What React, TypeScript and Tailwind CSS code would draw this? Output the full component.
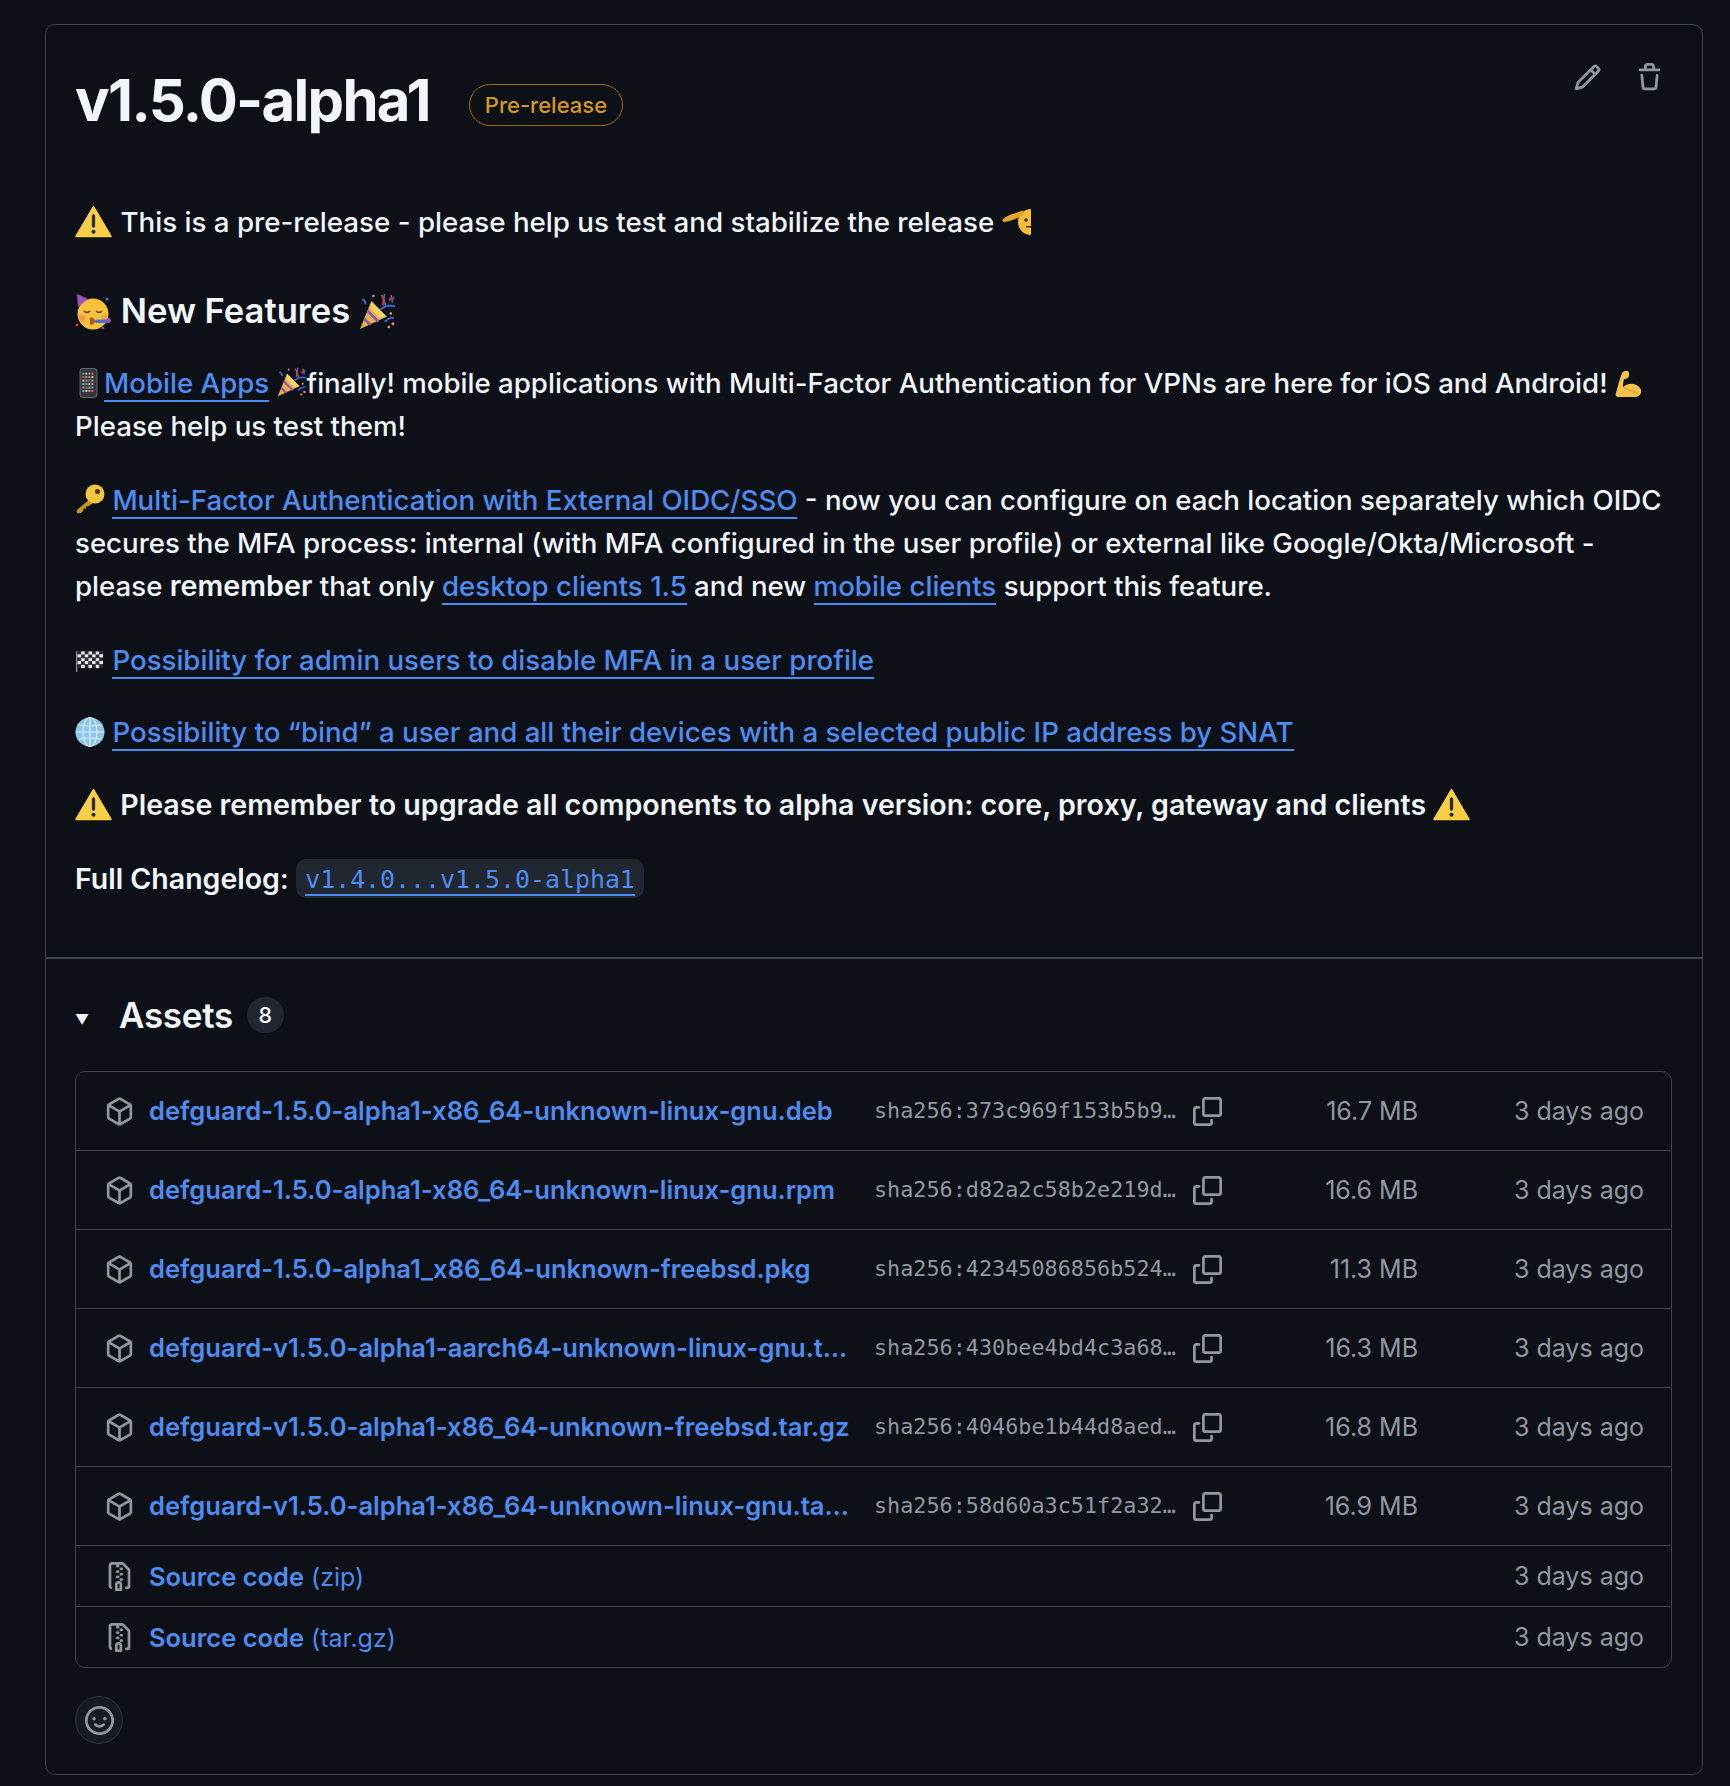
import type { ReactNode } from "react";

const sans = "font-['Inter','Liberation_Sans',sans-serif]";
const mono = "font-['DejaVu_Sans_Mono','Liberation_Mono',monospace]";

function Octicon({ d, size = 29, className = "" }: { d: string; size?: number; className?: string }) {
  return (
    <svg viewBox="0 0 16 16" width={size} height={size} fill="currentColor" className={`shrink-0 ${className}`}>
      <path d={d} />
    </svg>
  );
}

const icons = {
  pencil:
    "M11.013 1.427a1.75 1.75 0 0 1 2.474 0l1.086 1.086a1.75 1.75 0 0 1 0 2.474l-8.61 8.61c-.21.21-.47.364-.756.445l-3.251.93a.75.75 0 0 1-.927-.928l.929-3.25c.081-.286.235-.547.445-.758l8.61-8.61Zm.176 4.823L9.75 4.81l-6.286 6.287a.253.253 0 0 0-.064.108l-.558 1.953 1.953-.558a.253.253 0 0 0 .108-.064Zm1.238-3.763a.25.25 0 0 0-.354 0L10.811 3.75l1.439 1.44 1.263-1.263a.25.25 0 0 0 0-.354Z",
  trash:
    "M11 1.75V3h2.25a.75.75 0 0 1 0 1.5H2.75a.75.75 0 0 1 0-1.5H5V1.75C5 .784 5.784 0 6.75 0h2.5C10.216 0 11 .784 11 1.75ZM4.496 6.675l.66 6.6a.25.25 0 0 0 .249.225h5.19a.25.25 0 0 0 .249-.225l.66-6.6a.75.75 0 0 1 1.492.149l-.66 6.6A1.748 1.748 0 0 1 10.595 15h-5.19a1.75 1.75 0 0 1-1.741-1.575l-.66-6.6a.75.75 0 1 1 1.492-.15ZM6.5 1.75V3h3V1.75a.25.25 0 0 0-.25-.25h-2.5a.25.25 0 0 0-.25.25Z",
  copy:
    "M0 6.75C0 5.784.784 5 1.75 5h1.5a.75.75 0 0 1 0 1.5h-1.5a.25.25 0 0 0-.25.25v7.5c0 .138.112.25.25.25h7.5a.25.25 0 0 0 .25-.25v-1.5a.75.75 0 0 1 1.5 0v1.5A1.75 1.75 0 0 1 9.25 16h-7.5A1.75 1.75 0 0 1 0 14.25ZM5 1.75C5 .784 5.784 0 6.75 0h7.5C15.216 0 16 .784 16 1.75v7.5A1.75 1.75 0 0 1 14.25 11h-7.5A1.75 1.75 0 0 1 5 9.25Zm1.75-.25a.25.25 0 0 0-.25.25v7.5c0 .138.112.25.25.25h7.5a.25.25 0 0 0 .25-.25v-7.5a.25.25 0 0 0-.25-.25Z",
  box: "m8.878.392 5.25 3.045c.54.314.872.89.872 1.514v6.098a1.75 1.75 0 0 1-.872 1.514l-5.25 3.045a1.75 1.75 0 0 1-1.756 0l-5.25-3.045A1.75 1.75 0 0 1 1 11.049V4.951c0-.624.332-1.201.872-1.514L7.122.392a1.75 1.75 0 0 1 1.756 0ZM7.875 1.69l-4.63 2.685L8 7.133l4.755-2.758-4.63-2.685a.248.248 0 0 0-.25 0ZM2.5 5.677v5.372c0 .09.047.171.125.216l4.625 2.683V8.432Zm6.25 8.271 4.625-2.683a.25.25 0 0 0 .125-.216V5.677L8.75 8.432Z",
  zip: "M3.5 1.75v11.5c0 .09.048.173.126.217a.75.75 0 0 1-.752 1.298A1.748 1.748 0 0 1 2 13.25V1.75C2 .784 2.784 0 3.75 0h5.586c.464 0 .909.185 1.237.513l2.914 2.914c.329.328.513.773.513 1.237v8.586A1.75 1.75 0 0 1 12.25 15h-.5a.75.75 0 0 1 0-1.5h.5a.25.25 0 0 0 .25-.25V4.664a.25.25 0 0 0-.073-.177L9.513 1.573a.25.25 0 0 0-.177-.073H7.25a.75.75 0 0 1 0 1.5h-.5a.75.75 0 0 1 0-1.5h-3a.25.25 0 0 0-.25.25Zm3.75 8.75h.5c.966 0 1.75.784 1.75 1.75v3a.75.75 0 0 1-.75.75h-2.5a.75.75 0 0 1-.75-.75v-3c0-.966.784-1.75 1.75-1.75ZM6 5.25a.75.75 0 0 1 .75-.75h.5a.75.75 0 0 1 0 1.5h-.5A.75.75 0 0 1 6 5.25Zm.75 2.25h.5a.75.75 0 0 1 0 1.5h-.5a.75.75 0 0 1 0-1.5ZM8 6.75A.75.75 0 0 1 8.75 6h.5a.75.75 0 0 1 0 1.5h-.5A.75.75 0 0 1 8 6.75ZM8.75 3h.5a.75.75 0 0 1 0 1.5h-.5a.75.75 0 0 1 0-1.5ZM8 9.75A.75.75 0 0 1 8.75 9h.5a.75.75 0 0 1 0 1.5h-.5A.75.75 0 0 1 8 9.75Zm-1 2.5v2.25h1v-2.25a.25.25 0 0 0-.25-.25h-.5a.25.25 0 0 0-.25.25Z",
  smiley:
    "M8 0a8 8 0 1 1 0 16A8 8 0 0 1 8 0ZM1.5 8a6.5 6.5 0 1 0 13 0 6.5 6.5 0 0 0-13 0Zm3.82 1.636a.75.75 0 0 1 1.038.175l.007.009c.103.118.22.222.35.31.264.178.683.37 1.285.37.602 0 1.02-.192 1.285-.371.13-.088.247-.192.35-.31l.007-.008a.75.75 0 0 1 1.222.87l-.022-.015c.02.013.021.015.021.015v.001l-.001.002-.002.003-.005.007-.014.019a2.066 2.066 0 0 1-.184.213c-.16.166-.338.316-.53.445-.63.418-1.37.638-2.127.629-.946 0-1.652-.308-2.126-.63a3.331 3.331 0 0 1-.715-.657l-.014-.02-.005-.006-.002-.003v-.002h-.001l.613-.432-.614.43a.75.75 0 0 1 .183-1.044ZM12 7a1 1 0 1 1-2 0 1 1 0 0 1 2 0ZM5 8a1 1 0 1 1 0-2 1 1 0 0 1 0 2Zm5.25 2.25.592.416a97.71 97.71 0 0 0-.592-.416Z",
};

function Warn() {
  return (
    <svg viewBox="0 0 36 32" className="inline-block w-[37px] h-[33px] mr-[1px] align-[-6px]">
      <path d="M18 1.5 L35 30.5 H1 Z" fill="#f9cf45" stroke="#f9cf45" strokeWidth="1.6" strokeLinejoin="round" />
      <rect x="16.4" y="9" width="3.2" height="13" rx="1.6" fill="#2c2a22" />
      <circle cx="18" cy="26" r="2" fill="#2c2a22" />
    </svg>
  );
}

// saluting face, cut off on its right side like the reference
function Saluting() {
  return (
    <svg viewBox="0 0 29 26" className="inline-block w-[29px] h-[26px] align-[-3px]">
      <path d="M29 0 A13 13 0 0 0 16 13 A13 13 0 0 0 29 26 Z" fill="#f8bf35" />
      <path d="M1 10 C7 5 13 5 19 2 C22 1 23 4 21 6 C15 10 8 12 3 13 C0 13 0 11 1 10Z" fill="#e8a52e" />
      <circle cx="24" cy="11" r="1.8" fill="#3d2a10" />
      <rect x="24" y="17" width="5" height="1.4" fill="#3d2a10" />
    </svg>
  );
}

function Party() {
  return (
    <svg viewBox="0 0 36 36" className="inline-block w-[36px] h-[36px] mr-[1px] align-[-7px]">
      <circle cx="18" cy="20" r="15.5" fill="#f8c23c" />
      <path d="M2 0 L13 5 L3 13 Z" fill="#a34fc4" />
      <path d="M9 17 q3 3 6 0 M21 17 q3 3 6 0" stroke="#5a3312" strokeWidth="1.6" fill="none" />
      <circle cx="7" cy="24" r="3.5" fill="#f08a4b" opacity="0.7" />
      <circle cx="29" cy="23" r="3" fill="#f08a4b" opacity="0.5" />
      <rect x="20" y="25.5" width="13" height="3.5" rx="1.5" fill="#4c6fd6" />
      <circle cx="33.5" cy="26.5" r="2.4" fill="#a34fc4" />
      <path d="M15 23 q5 1 5 4 q0 3 -5 4" fill="#a65a1f" />
      <circle cx="32" cy="5" r="1.6" fill="#4c6fd6" />
      <circle cx="2" cy="31" r="1.4" fill="#d8423c" />
      <circle cx="28" cy="34" r="1.3" fill="#d8423c" />
    </svg>
  );
}

function Popper({ small = false }: { small?: boolean }) {
  return (
    <svg
      viewBox="0 0 36 36"
      className={small ? "inline-block w-[30px] h-[30px] align-[-4px]" : "inline-block w-[37px] h-[37px] align-[-7px]"}
    >
      <path d="M1 35 L12 8 L27 23 Z" fill="#e3b53c" />
      <path d="M5 25 L11 31 M8 17 L19 28" stroke="#9b4fc4" strokeWidth="2.6" />
      <path d="M12 8 L27 23 L20 24 L11 15 Z" fill="#f3d468" />
      <path d="M3 6 q4 2 3 5 M25 1 q-2 6 1 11 M34 4 q-3 3 -1 5 M21 16 q6 -5 14 -3 M25 28 q4 -4 9 -4" stroke="#3f66d4" strokeWidth="1.8" fill="none" />
      <path d="M22 2 q3 5 1 10 M31 2 q2 3 -2 5" stroke="#d8423c" strokeWidth="1.6" fill="none" />
      <circle cx="33" cy="30" r="1.5" fill="#e77fa0" />
      <circle cx="29" cy="33" r="1.2" fill="#e3b53c" />
      <circle cx="31" cy="20" r="1.2" fill="#e3b53c" />
      <circle cx="14" cy="3" r="1.2" fill="#e77fa0" />
    </svg>
  );
}

function Phone() {
  const colors = ["#4fb3e8", "#e85a5a", "#f2c14e", "#6fcf6f", "#c77fe0"];
  const cells = [];
  for (let r = 0; r < 6; r++) {
    for (let c = 0; c < 4; c++) {
      cells.push(<rect key={`${r}-${c}`} x={3.5 + c * 3.2} y={5 + r * 3.7} width="2.1" height="2.1" fill={colors[(r + c * 2) % 5]} />);
    }
  }
  return (
    <svg viewBox="0 0 20 32" className="inline-block w-[19px] h-[30px] ml-[4px] mr-[6px] align-[-5px]">
      <rect x="1" y="0.5" width="18" height="31" rx="3" fill="#33363a" stroke="#7d8287" strokeWidth="0.8" />
      {cells}
    </svg>
  );
}

function KeyEmoji() {
  return (
    <svg viewBox="0 0 30 30" className="inline-block w-[30px] h-[30px] align-[-4px]">
      <path d="M16 14 L2 26 L2 29 L6 29 L8 27 L8.5 24.5 L11 24.5 L11.5 22 L14 22 L19 18 Z" fill="#c9971f" />
      <circle cx="20" cy="10" r="9.5" fill="#f2c63f" />
      <circle cx="22.5" cy="7.5" r="2.6" fill="#4b3a12" />
    </svg>
  );
}

function Flag() {
  const cells = [];
  for (let r = 0; r < 5; r++) {
    for (let c = 0; c < 7; c++) {
      cells.push(<rect key={`${r}-${c}`} x={2 + c * 3.8} y={2 + r * 3.5 + (c % 2) * 0.5} width="3.8" height="3.5" fill={(r + c) % 2 ? "#e9ebee" : "#2a2d31"} />);
    }
  }
  return (
    <svg viewBox="0 0 30 24" className="inline-block w-[30px] h-[23px] align-[-2px]">
      <rect x="0.5" y="2" width="1.2" height="22" fill="#9aa0a6" />
      {cells}
    </svg>
  );
}

function Globe() {
  return (
    <svg viewBox="0 0 30 30" className="inline-block w-[30px] h-[30px] align-[-5px]">
      <circle cx="15" cy="15" r="14.5" fill="#8cc6ea" />
      <g stroke="#dfeef8" strokeWidth="1.1" fill="none">
        <ellipse cx="15" cy="15" rx="7" ry="14.5" />
        <path d="M15 0.5 V29.5 M0.5 15 H29.5 M3 7.5 Q15 11 27 7.5 M3 22.5 Q15 19 27 22.5" />
      </g>
    </svg>
  );
}

function Biceps() {
  return (
    <svg viewBox="0 0 28 28" className="inline-block w-[28px] h-[28px] align-[-5px]">
      <path d="M7 3 C9 0 14 0 14 3 C15 7 12 9 9 9 C8 13 8 15 8 17 C12 13 20 12 25 18 C28 22 25 27 20 27 L3 27 C1 27 0 25 1 23 C3 15 5 8 7 3Z" fill="#f6c04a" />
      <path d="M8 17 C12 20 18 20 23 24" stroke="#d9962c" strokeWidth="1" fill="none" />
    </svg>
  );
}

function A({ children }: { children: ReactNode }) {
  return <a href="#" className="text-[#4d8cf0] border-b-[2px] border-[#4d8cf0]">{children}</a>;
}

type Asset = { name: string; sha: string; size: string };

const assets: Asset[] = [
  { name: "defguard-1.5.0-alpha1-x86_64-unknown-linux-gnu.deb", sha: "sha256:373c969f153b5b9…", size: "16.7 MB" },
  { name: "defguard-1.5.0-alpha1-x86_64-unknown-linux-gnu.rpm", sha: "sha256:d82a2c58b2e219d…", size: "16.6 MB" },
  { name: "defguard-1.5.0-alpha1_x86_64-unknown-freebsd.pkg", sha: "sha256:42345086856b524…", size: "11.3 MB" },
  { name: "defguard-v1.5.0-alpha1-aarch64-unknown-linux-gnu.t…", sha: "sha256:430bee4bd4c3a68…", size: "16.3 MB" },
  { name: "defguard-v1.5.0-alpha1-x86_64-unknown-freebsd.tar.gz", sha: "sha256:4046be1b44d8aed…", size: "16.8 MB" },
  { name: "defguard-v1.5.0-alpha1-x86_64-unknown-linux-gnu.ta…", sha: "sha256:58d60a3c51f2a32…", size: "16.9 MB" },
];

export default function App() {
  return (
    <div className={`${sans} min-h-[1786px] bg-[#0d1117] pt-[24px] pl-[45px] pr-[27px] text-[#f0f6fc]`}>
      <div className="h-[1751px] rounded-[10px] border border-[#3d444d]">
        <div className="relative pl-[29px] pr-[30px] pt-[40px] h-[932px] text-[27.65px] font-[450]">
          <div className="flex items-center h-[70px]">
            <h1 className="text-[58px] leading-[68px] font-bold tracking-[-1.7px]">v1.5.0-alpha1</h1>
            <span className="ml-[39px] mt-[10px] h-[42px] px-[15px] flex items-center rounded-full border border-[#9e6a03] text-[#d29922] text-[22px] font-medium">
              Pre-release
            </span>
          </div>
          <div className="absolute top-[38px] right-[38px] flex gap-[33px] text-[#9198a1]">
            <Octicon d={icons.pencil} />
            <Octicon d={icons.trash} />
          </div>

          <p className="mt-[66px] text-[27.72px] leading-[43px]">
            <Warn /> This is a pre-release - please help us test and stabilize the release <Saluting />
          </p>
          <h2 className="mt-[33px] text-[34.6px] leading-[66px] font-semibold">
            <Party /> New Features <Popper />
          </h2>
          <p className="mt-[19px] leading-[43px]">
            <Phone />
            <A>Mobile Apps</A> <Popper small />
            finally! mobile applications with Multi-Factor Authentication for VPNs are here for iOS and Android! <Biceps />
            <br />
            Please help us test them!
          </p>
          <p className="mt-[31px] leading-[43.2px]">
            <KeyEmoji /> <A>Multi-Factor Authentication with External OIDC/SSO</A> - now you can configure on each location separately which OIDC
            <br />
            secures the MFA process: internal (with MFA configured in the user profile) or external like Google/Okta/Microsoft -
            <br />
            please <b className="font-semibold text-[28.7px] leading-none">remember</b> that only <A>desktop clients 1.5</A> and new <A>mobile clients</A> support this feature.
          </p>
          <p className="mt-[30px] leading-[43px]">
            <Flag /> <A>Possibility for admin users to disable MFA in a user profile</A>
          </p>
          <p className="mt-[29px] leading-[43px]">
            <Globe /> <A>Possibility to “bind” a user and all their devices with a selected public IP address by SNAT</A>
          </p>
          <p className="mt-[29px] text-[28.6px] leading-[43px] font-semibold">
            <Warn /> Please remember to upgrade all components to alpha version: core, proxy, gateway and clients <Warn />
          </p>
          <p className="mt-[31px] text-[28.5px] leading-[43px]">
            <b className="font-semibold">Full Changelog</b>: {" "}
            <code className={`${mono} inline-block h-[39px] align-[0.5px] leading-[41px] rounded-[10px] bg-[#212730] px-[9px] text-[24.9px] font-normal`}>
              <A>v1.4.0...v1.5.0-alpha1</A>
            </code>
          </p>
        </div>

        <div className="border-t-[2px] border-[#3d444d] pl-[29px] pr-[30px]">
          <div className="flex items-center h-[112px]">
            <span className="w-[44px] text-[#f0f6fc] text-[14px] mt-[8px]">▼</span>
            <h2 className="text-[35px] font-semibold tracking-[-0.3px]">Assets</h2>
            <span className="ml-[14px] h-[36px] w-[37px] rounded-full bg-[#212730] flex items-center justify-center text-[21.5px] font-medium">8</span>
          </div>
          <div className="rounded-[10px] border border-[#3d444d] text-[25px]">
            {assets.map((a) => (
              <div key={a.name} className="flex items-center h-[79px] border-b border-[#3d444d] pt-[1px] pl-[29px] pr-[27px]">
                <div className="flex items-center w-[769px] shrink-0">
                  <Octicon d={icons.box} className="text-[#9198a1]" />
                  <a href="#" className="ml-[15px] text-[25.55px] font-semibold text-[#4d8cf0] whitespace-nowrap">{a.name}</a>
                </div>
                <span className={`${mono} w-[302px] text-[21.8px] text-[#9198a1] whitespace-nowrap`}>{a.sha}</span>
                <Octicon d={icons.copy} className="ml-[17px] text-[#9198a1]" />
                <span className="w-[196px] text-right text-[#9198a1]">{a.size}</span>
                <span className="flex-1 text-right text-[#9198a1]">3 days ago</span>
              </div>
            ))}
            {["zip", "tar.gz"].map((ext, i) => (
              <div key={ext} className={`flex items-center h-[60.5px] pt-[2px] pl-[29px] pr-[27px] ${i === 0 ? "border-b border-[#3d444d]" : ""}`}>
                <Octicon d={icons.zip} className="text-[#9198a1]" />
                <a href="#" className="ml-[15px] text-[#4d8cf0]">
                  <span className="font-semibold text-[25.5px]">Source code</span> ({ext})
                </a>
                <span className="flex-1 text-right text-[#9198a1]">3 days ago</span>
              </div>
            ))}
          </div>
          <div className="mt-[28px] w-[48px] h-[48px] rounded-full bg-[#161b22] border border-[#30363d] flex items-center justify-center text-[#9198a1]">
            <Octicon d={icons.smiley} />
          </div>
        </div>
      </div>
    </div>
  );
}
